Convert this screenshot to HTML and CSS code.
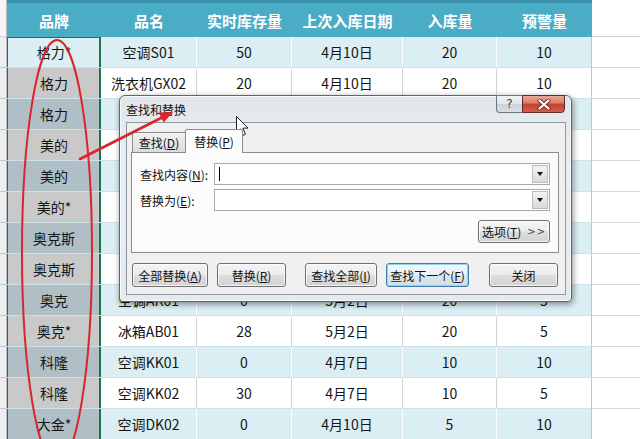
FILE: index.html
```html
<!DOCTYPE html>
<html lang="zh-CN">
<head>
<meta charset="utf-8">
<title>查找和替换</title>
<link rel="stylesheet" href="styles.css">
</head>
<body>
<div class="sheet">
  <div class="row hd">
    <div class="rh"></div>
    <div class="th">品牌</div><div class="th">品名</div><div class="th">实时库存量</div><div class="th">上次入库日期</div><div class="th">入库量</div><div class="th">预警量</div>
    <div class="out"></div>
  </div>
  <div class="row blue first">
    <div class="rh"></div><div class="c b">格力*</div><div class="c">空调S01</div><div class="c">50</div><div class="c">4月10日</div><div class="c">20</div><div class="c last">10</div><div class="out"></div>
  </div>
  <div class="row">
    <div class="rh"></div><div class="c b">格力</div><div class="c">洗衣机GX02</div><div class="c">20</div><div class="c">4月10日</div><div class="c">20</div><div class="c last">10</div><div class="out"></div>
  </div>
  <div class="row blue">
    <div class="rh"></div><div class="c b">格力</div><div class="c"></div><div class="c"></div><div class="c"></div><div class="c"></div><div class="c last"></div><div class="out"></div>
  </div>
  <div class="row">
    <div class="rh"></div><div class="c b">美的</div><div class="c"></div><div class="c"></div><div class="c"></div><div class="c"></div><div class="c last"></div><div class="out"></div>
  </div>
  <div class="row blue">
    <div class="rh"></div><div class="c b">美的</div><div class="c"></div><div class="c"></div><div class="c"></div><div class="c"></div><div class="c last"></div><div class="out"></div>
  </div>
  <div class="row">
    <div class="rh"></div><div class="c b">美的*</div><div class="c"></div><div class="c"></div><div class="c"></div><div class="c"></div><div class="c last"></div><div class="out"></div>
  </div>
  <div class="row blue">
    <div class="rh"></div><div class="c b">奥克斯</div><div class="c"></div><div class="c"></div><div class="c"></div><div class="c"></div><div class="c last"></div><div class="out"></div>
  </div>
  <div class="row">
    <div class="rh"></div><div class="c b">奥克斯</div><div class="c"></div><div class="c"></div><div class="c"></div><div class="c"></div><div class="c last"></div><div class="out"></div>
  </div>
  <div class="row blue">
    <div class="rh"></div><div class="c b">奥克</div><div class="c">空调AK01</div><div class="c">0</div><div class="c">5月2日</div><div class="c">20</div><div class="c last">5</div><div class="out"></div>
  </div>
  <div class="row">
    <div class="rh"></div><div class="c b">奥克*</div><div class="c">冰箱AB01</div><div class="c">28</div><div class="c">5月2日</div><div class="c">20</div><div class="c last">5</div><div class="out"></div>
  </div>
  <div class="row blue">
    <div class="rh"></div><div class="c b">科隆</div><div class="c">空调KK01</div><div class="c">0</div><div class="c">4月7日</div><div class="c">10</div><div class="c last">10</div><div class="out"></div>
  </div>
  <div class="row">
    <div class="rh"></div><div class="c b">科隆</div><div class="c">空调KK02</div><div class="c">30</div><div class="c">4月7日</div><div class="c">10</div><div class="c last">5</div><div class="out"></div>
  </div>
  <div class="row blue">
    <div class="rh"></div><div class="c b">大金*</div><div class="c">空调DK02</div><div class="c">0</div><div class="c">4月10日</div><div class="c">5</div><div class="c last">10</div><div class="out"></div>
  </div>
</div>

<div class="dialog">
  <div class="titlebar"><span class="title">查找和替换</span></div>
  <div class="capbtns">
    <span class="help">?</span>
    <span class="close"><svg width="14" height="11" viewBox="0 0 14 11"><path d="M2.5 1.5 L11.5 9.5 M11.5 1.5 L2.5 9.5" stroke="#6b2a1f" stroke-width="4" stroke-linecap="round"/><path d="M2.5 1.5 L11.5 9.5 M11.5 1.5 L2.5 9.5" stroke="#fff" stroke-width="2.2" stroke-linecap="round"/></svg></span>
  </div>
  <div class="client">
    <div class="tabs">
      <span class="tab">查找(<u>D</u>)</span>
      <span class="tab active">替换(<u>P</u>)</span>
    </div>
    <div class="panel">
      <div class="field">
        <span class="lbl">查找内容(<u>N</u>):</span>
        <div class="combo"><span class="caret"></span><span class="drop"><span class="tri"></span></span></div>
      </div>
      <div class="field second">
        <span class="lbl">替换为(<u>E</u>):</span>
        <div class="combo"><span class="drop"><span class="tri"></span></span></div>
      </div>
      <div class="optrow"><span class="btn opt">选项(<u>T</u>) <span class="gt">&gt;&gt;</span></span></div>
    </div>
    <div class="btnrow">
      <span class="btn w76">全部替换(<u>A</u>)</span>
      <span class="btn w69">替换(<u>R</u>)</span>
      <span class="btn w72 gap">查找全部(<u>I</u>)</span>
      <span class="btn w83 focus">查找下一个(<u>F</u>)</span>
      <span class="btn w69 gap">关闭</span>
    </div>
  </div>
</div>

<svg class="marks" width="640" height="439" viewBox="0 0 640 439">
  <ellipse cx="57" cy="252" rx="35" ry="212" fill="none" stroke="#d8262c" stroke-width="2"/>
  <line x1="80" y1="159" x2="163" y2="117" stroke="#d8262c" stroke-width="2.6" stroke-linecap="round"/>
  <polygon points="173,112 163.6,122.5 158.6,112.6" fill="#d8262c"/>
  <path d="M236.5 116.5 v16 l3.8 -3.6 l2.8 6.4 l2.4 -1 l-2.7 -6.2 h5.2 z" fill="#fff" stroke="#222" stroke-width="1"/>
</svg>
</body>
</html>
```

FILE: styles.css
```css
* { box-sizing: border-box; margin: 0; padding: 0; }
html, body { width: 640px; height: 439px; overflow: hidden; }
body {
  position: relative;
  background: #fff;
  color: #151515;
  font-family: "Noto Sans CJK SC", "Liberation Sans", sans-serif;
}

/* spreadsheet */
.sheet {
  display: grid;
  grid-template-columns: 7px 94px 96px 95px 111px 94px 95px 48px;
  grid-template-rows: 37px;
  grid-auto-rows: 31px;
  width: 640px;
}
.row { display: contents; }
.rh {
  background: #eceef0;
  border-bottom: 1px solid #c4c8cc;
  border-right: 1px solid #b8bdc2;
}
.hd .rh { background: #f6f6f6; border-bottom-color: #d2d5d8; }
.th {
  display: flex;
  align-items: center;
  justify-content: center;
  padding-top: 3px;
  background: #4bacc6;
  box-shadow: inset 0 3px 0 #3991ac;
  color: #fff;
  font-weight: 700;
  font-size: 15px;
}
.out { background: #fff; border-bottom: 1px solid #d9d9d9; }
.hd .out { border-bottom-color: #d0d0d0; }
.c {
  display: flex;
  align-items: center;
  justify-content: center;
  font-size: 14px;
  background: #fff;
  border-right: 1px solid #d4d4d4;
  border-bottom: 1px solid #cde1e8;
}
.blue .c { background: #daeef3; border-right-color: #fff; }
.c.last { border-right: 1px solid #a6cedb; }
.b {
  background: #c9c9c9;
  border-right: none;
  box-shadow: inset 1px 0 0 #217346, inset -2px 0 0 #217346;
}
.blue .b { background: #afbfc5; }
.first .b {
  background: #daeef3;
  box-shadow: inset 1px 0 0 #217346, inset -2px 0 0 #217346, inset 0 1px 0 #217346;
}

/* dialog */
.dialog {
  position: absolute;
  left: 119px;
  top: 95px;
  width: 453px;
  height: 207px;
  border: 1px solid #5d666d;
  border-radius: 6px 6px 4px 4px;
  background: linear-gradient(to bottom, #dfe6eb 0%, #eaeef1 30%, #e6eaec 100%);
  box-shadow: 1px 2px 6px rgba(0, 0, 0, 0.45), inset 0 0 0 1px rgba(255, 255, 255, 0.7);
  font-size: 12px;
  color: #111;
}
.titlebar {
  height: 26px;
  display: flex;
  align-items: center;
  padding-left: 6px;
}
.title { font-size: 12px; color: #111; }
.capbtns {
  position: absolute;
  top: -1px;
  right: 6px;
  display: flex;
}
.help, .close {
  height: 18px;
  display: flex;
  align-items: center;
  justify-content: center;
}
.help {
  width: 26px;
  border: 1px solid #6c777f;
  border-right: none;
  border-radius: 0 0 0 4px;
  background: linear-gradient(to bottom, #f1f4f6 0%, #dfe5ea 50%, #c9d2d9 51%, #d8e0e6 100%);
  color: #3b4248;
  font-size: 12px;
  font-family: "DejaVu Sans", sans-serif;
}
.close {
  width: 43px;
  border: 1px solid #5e2a22;
  border-radius: 0 0 4px 0;
  background: linear-gradient(to bottom, #eba897 0%, #dc7a64 45%, #c7402c 50%, #d2604a 100%);
}
.client {
  margin: 0 5px 0 6px;
  height: 173px;
  border: 1px solid #8d99a2;
  background: #f0f0f0;
}
.tabs {
  display: flex;
  align-items: flex-start;
  height: 23px;
  margin-top: 6px;
  padding-left: 5px;
}
.tab {
  display: flex;
  align-items: center;
  justify-content: center;
  border: 1px solid #898c95;
  border-bottom: none;
  font-size: 12px;
}
.tab:first-child {
  width: 53px;
  height: 20px;
  margin-top: 3px;
  background: linear-gradient(to bottom, #f1f1f1, #dcdcdc);
  border-right: none;
  border-radius: 2px 0 0 0;
}
.tab.active {
  width: 58px;
  height: 24px;
  background: #fcfcfc;
  position: relative;
  z-index: 1;
  border-radius: 2px 2px 0 0;
}
.panel {
  margin: 0 6px 0 4px;
  height: 101px;
  border: 1px solid #898c95;
  background: #fbfbfb;
  padding: 10px 8px 0 8px;
}
.field {
  display: flex;
  align-items: center;
  height: 22px;
}
.field.second { margin-top: 4px; }
.lbl { width: 74px; font-size: 12px; }
.combo {
  flex: 1;
  height: 22px;
  border: 1px solid #a5a9b1;
  background: #fff;
  display: flex;
  align-items: center;
  justify-content: space-between;
  padding: 1px;
}
.caret {
  width: 1px;
  height: 14px;
  margin-left: 3px;
  background: #000;
}
.drop {
  margin-left: auto;
  width: 16px;
  height: 18px;
  border: 1px solid #b9bcc1;
  background: linear-gradient(to bottom, #f3f3f3, #dadada);
  display: flex;
  align-items: center;
  justify-content: center;
}
.tri {
  width: 0;
  height: 0;
  border-left: 3.5px solid transparent;
  border-right: 3.5px solid transparent;
  border-top: 4px solid #111;
}
.optrow {
  display: flex;
  justify-content: flex-end;
  margin-top: 9px;
}
.btn {
  display: flex;
  align-items: center;
  justify-content: center;
  height: 24px;
  border: 1px solid #707070;
  border-radius: 3px;
  background: linear-gradient(to bottom, #f4f4f4 0%, #ececec 48%, #dedede 52%, #d2d2d2 100%);
  box-shadow: inset 0 0 0 1px rgba(255, 255, 255, 0.75);
  font-size: 12px;
  color: #111;
}
.opt { width: 72px; height: 23px; }
.gt { margin-left: 6px; font-size: 10px; letter-spacing: 1px; color: #444; font-family: "DejaVu Sans", sans-serif; }
.btnrow {
  display: flex;
  gap: 9px;
  margin-top: 10px;
  padding-left: 5px;
}
.w76 { width: 76px; }
.w69 { width: 69px; }
.w72 { width: 72px; }
.w83 { width: 83px; }
.gap { margin-left: 10px; }
.btnrow .w69.gap { margin-left: 11px; }
.focus {
  border-color: #3c7fb1;
  background: linear-gradient(to bottom, #f3f8fb 0%, #e9f2f8 48%, #dbe6ee 52%, #d3dfe8 100%);
  box-shadow: inset 0 0 0 1px #8ed3f2;
}

/* annotation overlay */
.marks {
  position: absolute;
  left: 0;
  top: 0;
  pointer-events: none;
}
```
